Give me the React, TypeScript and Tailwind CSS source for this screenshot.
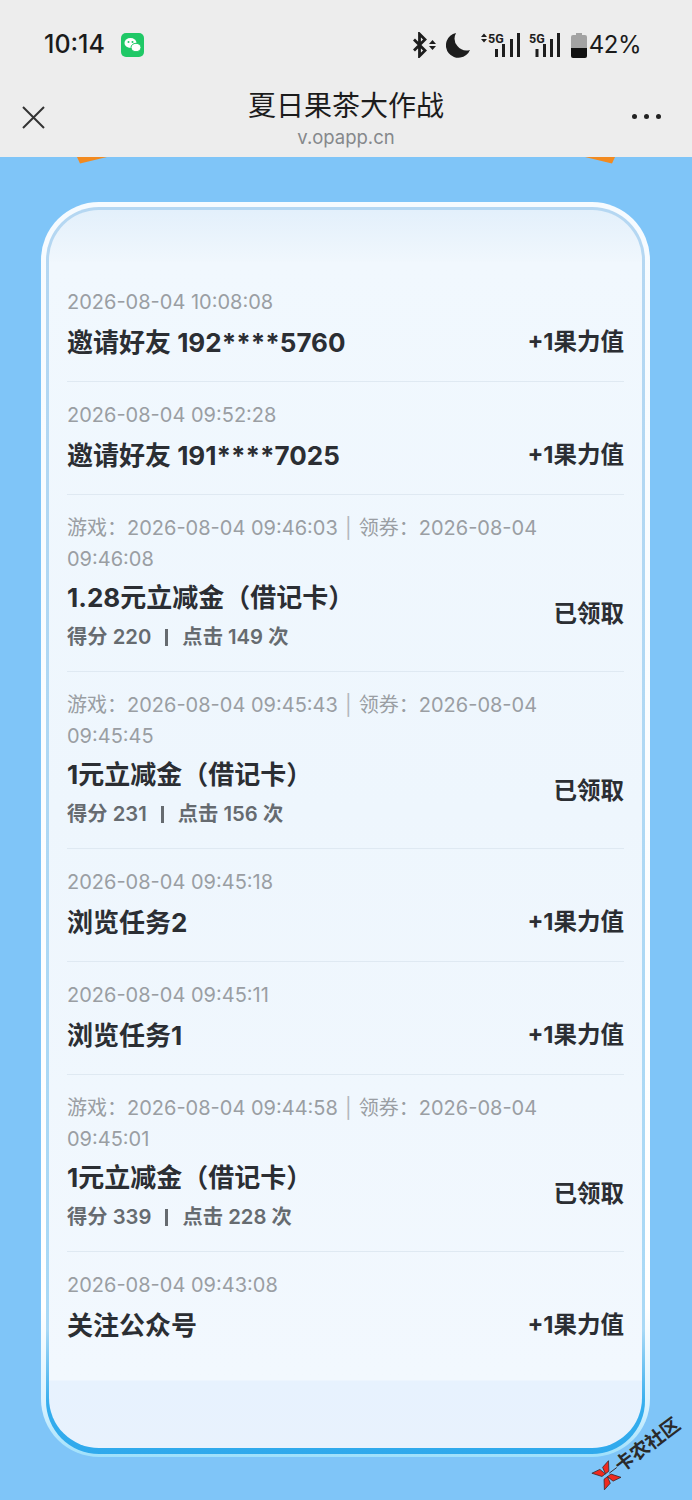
const fontStack = "font-['Inter','Noto_Sans_CJK_SC',sans-serif]";

type Reward = {
  date: string;
  claimed?: string;
  title: string;
  reward: string;
  score?: number;
  clicks?: number;
};

const records: Reward[] = [
  { date: "2026-08-04 10:08:08", title: "邀请好友 192****5760", reward: "+1果力值" },
  { date: "2026-08-04 09:52:28", title: "邀请好友 191****7025", reward: "+1果力值" },
  {
    date: "2026-08-04 09:46:03",
    claimed: "2026-08-04 09:46:08",
    title: "1.28元立减金（借记卡）",
    score: 220,
    clicks: 149,
    reward: "已领取",
  },
  {
    date: "2026-08-04 09:45:43",
    claimed: "2026-08-04 09:45:45",
    title: "1元立减金（借记卡）",
    score: 231,
    clicks: 156,
    reward: "已领取",
  },
  { date: "2026-08-04 09:45:18", title: "浏览任务2", reward: "+1果力值" },
  { date: "2026-08-04 09:45:11", title: "浏览任务1", reward: "+1果力值" },
  {
    date: "2026-08-04 09:44:58",
    claimed: "2026-08-04 09:45:01",
    title: "1元立减金（借记卡）",
    score: 339,
    clicks: 228,
    reward: "已领取",
  },
  { date: "2026-08-04 09:43:08", title: "关注公众号", reward: "+1果力值" },
];

function SignalWithArrows() {
  return (
    <svg width="40" height="26" viewBox="0 0 40 26" fill="#1d1d1d">
      <path d="M1 5l3-3.500L7 5zM1 7l3 3.500L7 7z" />
      <text x="8" y="11" fontSize="12.500" fontWeight="700" fontFamily="Roboto, sans-serif">5G</text>
      <rect x="15" y="17" width="3" height="8" />
      <rect x="22" y="12" width="3" height="13" />
      <rect x="30" y="7" width="3" height="18" />
      <rect x="37" y="1" width="3" height="24" />
    </svg>
  );
}

function Signal() {
  return (
    <svg width="32" height="26" viewBox="0 0 32 26" fill="#1d1d1d">
      <text x="1" y="11" fontSize="12.500" fontWeight="700" fontFamily="Roboto, sans-serif">5G</text>
      <rect x="7.500" y="17" width="3" height="8" />
      <rect x="15" y="12" width="3" height="13" />
      <rect x="22" y="7" width="3" height="18" />
      <rect x="29" y="1" width="3" height="24" />
    </svg>
  );
}

function StatusBar() {
  return (
    <div className="flex h-[88px] items-center justify-between pl-[44px] pr-[51px] pt-[2px]">
      <div className="flex items-center gap-[16px]">
        <span className={`${fontStack} text-[25px] font-medium text-[#1b1b1b]`}>10:14</span>
        <svg width="23" height="24" viewBox="0 0 23 24">
          <rect width="23" height="24" rx="5" fill="#1fc866" />
          <ellipse cx="9.500" cy="10" rx="6" ry="5" fill="#fff" />
          <ellipse cx="15" cy="14.500" rx="5" ry="4.200" fill="#fff" stroke="#1fc866" />
          <circle cx="7.500" cy="9" r="1" fill="#1fc866" />
          <circle cx="11.500" cy="9" r="1" fill="#1fc866" />
        </svg>
      </div>
      <div className="flex items-center">
        <svg width="24" height="26" viewBox="0 0 24 26" fill="none">
          <path d="M2 7.500l11 11-5.500 5.500V2l5.500 5.500L2 18.500" stroke="#1d1d1d" strokeWidth="2.800" />
          <path d="M17 12l3.500-4 3.500 4zM17 14l3.500 4 3.500-4z" fill="#1d1d1d" />
        </svg>
        <svg className="ml-[10px]" width="24" height="26" viewBox="0 0 24 26">
          <path d="M10 1a12.500 12.500 0 1 0 14 17A12 12 0 0 1 10 1z" fill="#1d1d1d" />
        </svg>
        <div className="ml-[10px]">
          <SignalWithArrows />
        </div>
        <div className="ml-[8px]">
          <Signal />
        </div>
        <svg className="ml-[11px]" width="16" height="25" viewBox="0 0 16 25">
          <rect x="5" y="0" width="6" height="3" fill="#a3a3a3" />
          <path d="M0 4a2 2 0 0 1 2-2h12a2 2 0 0 1 2 2v11H0z" fill="#a3a3a3" />
          <path d="M0 15h16v8a2 2 0 0 1-2 2H2a2 2 0 0 1-2-2z" fill="#111" />
        </svg>
        <span className={`${fontStack} ml-[2px] text-[24px] tracking-[-0.5px] text-[#1b1b1b]`}>42%</span>
      </div>
    </div>
  );
}

function NavBar() {
  return (
    <div className="relative flex h-[69px] items-start justify-between pl-[21px] pr-[31px]">
      <svg className="mt-[17px]" width="25" height="25" viewBox="0 0 25 25" stroke="#333" strokeWidth="2">
        <path d="M2 2l21 21M23 2L2 23" />
      </svg>
      <div className="absolute inset-x-0 top-0 flex flex-col items-center">
        <span className={`${fontStack} text-[28px] leading-[36px] text-[#1c1c1c]`}>夏日果茶大作战</span>
        <span className={`${fontStack} mt-[1px] text-[18.500px] leading-[24px] text-[#85888b]`}>v.opapp.cn</span>
      </div>
      <div className="mt-[26px] flex gap-[7px]">
        <span className="size-[5px] rounded-full bg-[#222]" />
        <span className="size-[5px] rounded-full bg-[#222]" />
        <span className="size-[5px] rounded-full bg-[#222]" />
      </div>
    </div>
  );
}

function RecordRow({ record, last }: { record: Reward; last: boolean }) {
  const isGame = record.score !== undefined;
  return (
    <div
      className={`flex items-center justify-between pt-[18px] ${isGame ? "pb-[20px]" : "pb-[19px]"} ${
        last ? "" : "border-b border-[#dfe9f2]"
      }`}
    >
      <div className="w-[476px]">
        <p className="text-[20px] leading-[31px] text-[#9a9ea3]">
          {isGame ? (
            <>
              游戏：{record.date}
              <span className="mx-[1.500px] text-[#b4b8bc]"> | </span>
              领券：{record.claimed}
            </>
          ) : (
            record.date
          )}
        </p>
        <p className={`${isGame ? "mt-[4px]" : "mt-[6px]"} text-[26px] leading-[38px] font-bold text-[#2b2e33]`}>
          {record.title}
        </p>
        {isGame && (
          <div className="mt-[6px] flex h-[28px] items-center gap-[14px] text-[20.300px] font-semibold text-[#666b70]">
            <span>得分 {record.score}</span>
            <span className="h-[17px] w-[3px] bg-[#666b70]" />
            <span>点击 {record.clicks} 次</span>
          </div>
        )}
      </div>
      <span className={`whitespace-nowrap text-[23.500px] font-bold text-[#2b2e33] ${isGame ? "mt-[64px]" : "mt-[35px]"}`}>
        {record.reward}
      </span>
    </div>
  );
}

function Watermark() {
  return (
    <div className="absolute left-[586px] top-[1431px] flex h-[44px] w-[100px] -rotate-[37deg] items-center">
      <svg className="shrink-0" width="26" height="26" viewBox="0 0 30 30">
        <path d="M3 3l10 2 2 8 2-8 10-2-7 10h-10zM3 27l10-2 2-8 2 8 10 2-7-10h-10z" fill="#ef2a1f" stroke="#35262a" strokeWidth="0.800" />
        <path d="M19 15h11" stroke="#35262a" strokeWidth="1" />
      </svg>
      <span className={`${fontStack} whitespace-nowrap text-[19px] leading-none font-bold text-[#2a2a2a]`}>卡农社区</span>
    </div>
  );
}

export default function App() {
  return (
    <div className={`${fontStack} relative h-[1500px] overflow-hidden bg-[#7fc5f8]`}>
      <div className="relative z-10 bg-[#ededed]">
        <StatusBar />
        <NavBar />
      </div>
      <svg className="absolute left-[75px] top-[157px]" width="32" height="7" viewBox="0 0 32 7">
        <path d="M2 0h30L5 6.500z" fill="#f28a20" />
      </svg>
      <svg className="absolute left-[585px] top-[157px]" width="32" height="7" viewBox="0 0 32 7">
        <path d="M0 0h30l-3 6.500z" fill="#f28a20" />
      </svg>

      <div className="ml-[41px] mr-[42px] mt-[45px] rounded-[58px] bg-[linear-gradient(180deg,#f6fbff_0%,#ffffff_88%,#d8f2ff_96%,#9fe0fb_100%)] p-[5px] pb-[3px]">
        <div className="rounded-[53px] bg-[linear-gradient(180deg,#b5d7f2_0%,#a9d9f6_90%,#35aeee_96%,#2fa9ec_100%)] p-[3px] pb-[6px]">
          <div className="rounded-[50px] bg-[linear-gradient(180deg,#e3f0fb_0px,#f0f7fd_51px,#f1f8fe_52px,#eef6fd_600px,#f2f8fe_1170px,#e7f2fe_1171px,#e8f2fd_1235px)] px-[18px] pt-[59px] pb-[84px]">
            {records.map((record, index) => (
              <RecordRow key={record.date} record={record} last={index === records.length - 1} />
            ))}
          </div>
        </div>
      </div>

      <Watermark />
    </div>
  );
}
